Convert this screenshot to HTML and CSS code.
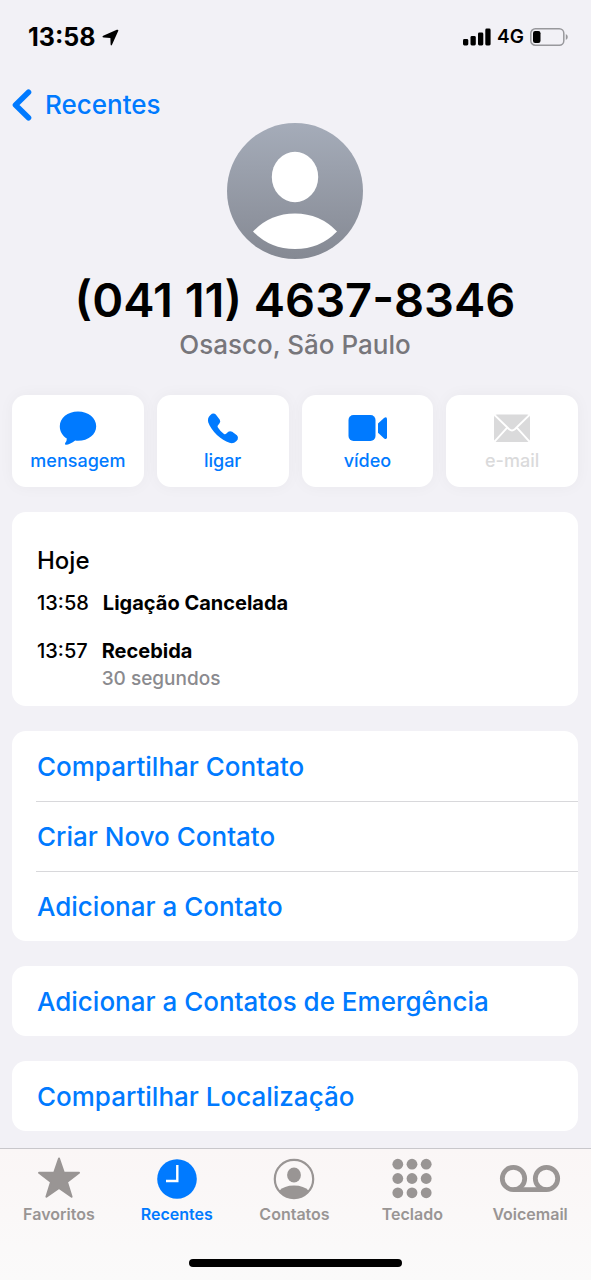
FILE: index.html
```html
<!DOCTYPE html>
<html lang="pt-BR">
<head>
<meta charset="utf-8">
<meta name="viewport" content="width=device-width, initial-scale=1">
<title>(041 11) 4637-8346</title>
<link rel="stylesheet" href="styles.css">
</head>
<body>
<div class="screen">
  <header class="status-bar">
    <div class="status-left">
      <span class="clock">13:58</span>
      <svg width="17" height="17" viewBox="0 0 17 17" aria-hidden="true"><path d="M1.200 6.800 14.800.8Q16.800.2 16.200 2L10 15.800Q8.900 17.200 8.600 15.200L8.400 8.900 1.800 8.600Q-.5 8 1.200 6.800Z"/></svg>
    </div>
    <div class="status-right">
      <svg width="28" height="18" viewBox="0 0 28 18" aria-hidden="true"><rect x="0" y="11" width="5.300" height="6.500" rx="1.400"/><rect x="7.500" y="8" width="5.300" height="9.500" rx="1.400"/><rect x="15" y="4.500" width="5.300" height="13" rx="1.400"/><rect x="22.300" y="0.500" width="5.300" height="17" rx="1.400"/></svg>
      <span class="network">4G</span>
      <svg width="38" height="18" viewBox="0 0 38 18" aria-hidden="true"><rect x="0.800" y="0.800" width="33" height="16.400" rx="4.500" fill="none" stroke="#98989c" stroke-width="1.500"/><rect x="3" y="3" width="7.500" height="12" rx="2.200"/><path d="M35.800 6v6q2-.9 2-3t-2-3Z" fill="#98989c"/></svg>
    </div>
  </header>

  <nav class="nav-bar">
    <a class="back" href="#recentes">
      <svg width="20" height="32" viewBox="0 0 20 32" aria-hidden="true"><path d="M16.500 3.200 3.500 16 16.500 28.800" fill="none" stroke="currentColor" stroke-width="5.600" stroke-linecap="round" stroke-linejoin="round"/></svg>
      <span>Recentes</span>
    </a>
  </nav>

  <main class="content">
    <section class="profile">
      <svg class="avatar" width="136" height="136" viewBox="0 0 136 136" aria-hidden="true">
        <defs><linearGradient id="avatar-fill" x1="0" y1="0" x2="0" y2="1"><stop offset="0" stop-color="#a5acb9"/><stop offset="1" stop-color="#858993"/></linearGradient></defs>
        <circle cx="68" cy="68" r="68" fill="url(#avatar-fill)"/>
        <ellipse cx="68" cy="54" rx="23.200" ry="25.200" fill="#fff"/>
        <path d="M26 108.500Q43 90.500 68 90.500T110 108.500Q93 126 68 126T26 108.500Z" fill="#fff"/>
      </svg>
      <h1 class="number">(041 11) 4637-8346</h1>
      <p class="place">Osasco, São Paulo</p>
    </section>

    <div class="actions">
      <button class="action" type="button">
        <svg width="38" height="34" viewBox="0 0 38 34" aria-hidden="true"><path d="M19 .5C29.500.5 37.200 7 37.200 15.300S29.500 29.800 19 29.800q-1.500 0-2.800-.2C12.700 32.300 9 34 6.800 33.800q-1.500-.4-.6-1.800 1.800-2.200 1.600-4.500C3.500 25 .8 20.500.8 15.300.8 7 8.500.5 19 .5Z" fill="currentColor"/></svg>
        <span>mensagem</span>
      </button>
      <button class="action" type="button">
        <svg width="32" height="34" viewBox="0 0 32 34" aria-hidden="true"><path d="M3.200 4.200 4.900 2.800Q7.100 1.700 8.800 3.600L12.800 8.800Q13.900 10.800 12.400 12.500L10.800 14.400Q10.200 15.300 10.900 16.500 13.200 20.300 17 22.900 18.200 23.600 19.100 22.800L21.300 20.800Q23 19.500 25.200 20.800L29.900 24.200Q32 26.300 30.700 28.600L29.200 30.200Q26.500 33 22.500 31.800C14.500 29.500 4.200 20 1.200 11.300Q.2 6.800 3.200 4.200Z" fill="currentColor"/></svg>
        <span>ligar</span>
      </button>
      <button class="action" type="button">
        <svg width="40" height="34" viewBox="0 0 40 34" aria-hidden="true"><rect x="1.500" y="4" width="27" height="26" rx="5" fill="currentColor"/><path d="M31 12.500 37 7Q40 5.200 40 8.300V26.200Q39.900 29 37.200 27.500L31 21.800Z" fill="currentColor"/></svg>
        <span>vídeo</span>
      </button>
      <button class="action" type="button" disabled>
        <svg width="36" height="34" viewBox="0 0 36 34" aria-hidden="true"><rect y="3.500" width="36" height="27.500" rx="3" fill="currentColor"/><path d="M.5 4 15.200 18.200Q18 20.600 20.800 18.200L35.500 4M.5 30.500 13.200 16.700M35.500 30.500 22.800 16.700" fill="none" stroke="#fff" stroke-width="1.900"/></svg>
        <span>e-mail</span>
      </button>
    </div>

    <section class="card history">
      <h2 class="day">Hoje</h2>
      <div class="call">
        <time class="call-time">13:58</time>
        <div><p class="call-kind">Ligação Cancelada</p></div>
      </div>
      <div class="call">
        <time class="call-time">13:57</time>
        <div>
          <p class="call-kind">Recebida</p>
          <p class="call-length">30 segundos</p>
        </div>
      </div>
    </section>

    <div class="card">
      <button class="row" type="button"><span>Compartilhar Contato</span></button>
      <button class="row" type="button"><span>Criar Novo Contato</span></button>
      <button class="row" type="button"><span>Adicionar a Contato</span></button>
    </div>
    <div class="card">
      <button class="row" type="button"><span>Adicionar a Contatos de Emergência</span></button>
    </div>
    <div class="card">
      <button class="row" type="button"><span>Compartilhar Localização</span></button>
    </div>
  </main>

  <footer class="tab-bar">
    <nav class="tabs">
      <a class="tab" href="#favoritos">
        <svg width="44" height="44" viewBox="0 0 44 44" aria-hidden="true"><path d="M22 2.500 26.800 16.500 42 16.800 30 26 34.600 40.800 22 32 9.400 40.800 14 26 2 16.800 17.200 16.500Z" fill="currentColor" stroke="currentColor" stroke-width="2" stroke-linejoin="round"/></svg>
        <span>Favoritos</span>
      </a>
      <a class="tab tab-current" href="#recentes" aria-current="page">
        <svg width="40" height="44" viewBox="0 0 40 44" aria-hidden="true"><circle cx="20" cy="23" r="19.800" fill="currentColor"/><path d="M20.300 9V25H9" fill="none" stroke="#fff" stroke-width="2.400"/></svg>
        <span>Recentes</span>
      </a>
      <a class="tab" href="#contatos">
        <svg width="42" height="44" viewBox="0 0 42 44" aria-hidden="true"><defs><clipPath id="badge"><circle cx="21" cy="23" r="19"/></clipPath></defs><circle cx="21" cy="23" r="19.200" fill="none" stroke="currentColor" stroke-width="2.200"/><g clip-path="url(#badge)" fill="currentColor"><ellipse cx="21" cy="19" rx="6.900" ry="7.500"/><path d="M6 35Q11 29.500 21 29.500T36 35L34 43H8Z"/></g></svg>
        <span>Contatos</span>
      </a>
      <a class="tab" href="#teclado">
        <svg width="40" height="44" viewBox="0 0 40 44" aria-hidden="true"><g fill="currentColor"><circle cx="5.800" cy="8.200" r="5.400"/><circle cx="20" cy="8.200" r="5.400"/><circle cx="34.200" cy="8.200" r="5.400"/><circle cx="5.800" cy="22.500" r="5.400"/><circle cx="20" cy="22.500" r="5.400"/><circle cx="34.200" cy="22.500" r="5.400"/><circle cx="5.800" cy="36.800" r="5.400"/><circle cx="20" cy="36.800" r="5.400"/><circle cx="34.200" cy="36.800" r="5.400"/></g></svg>
        <span>Teclado</span>
      </a>
      <a class="tab" href="#voicemail">
        <svg width="62" height="44" viewBox="0 0 62 44" aria-hidden="true"><g fill="none" stroke="currentColor" stroke-width="4.800"><circle cx="14.500" cy="22.500" r="11.200"/><circle cx="47.500" cy="22.500" r="11.200"/><path d="M14.500 33.700H47.500"/></g></svg>
        <span>Voicemail</span>
      </a>
    </nav>
    <div class="home-indicator"></div>
  </footer>
</div>
</body>
</html>
```
FILE: styles.css
```css
* {
  box-sizing: border-box;
}

body {
  margin: 0;
  background: #f2f1f6;
  color: #000;
  font-family: Inter, "Liberation Sans", sans-serif;
}

h1, h2, p {
  margin: 0;
}

svg {
  display: block;
  flex: none;
}

button {
  border: 0;
  font-family: inherit;
  color: #007aff;
}

a {
  color: inherit;
  text-decoration: none;
}

.screen {
  display: flex;
  flex-direction: column;
  min-height: 100vh;
}

.status-bar {
  display: flex;
  justify-content: space-between;
  align-items: center;
  height: 74px;
  padding: 0 23px 0 28px;
}

.status-left,
.status-right {
  display: flex;
  align-items: center;
  gap: 6px;
}

.clock {
  font-size: 25px;
  line-height: 32px;
  font-weight: 700;
}

.network {
  font-size: 19px;
  line-height: 24px;
  font-weight: 600;
}

.nav-bar {
  height: 49px;
  padding: 15px 13px 0 12px;
}

.back {
  display: inline-flex;
  align-items: center;
  gap: 13px;
  color: #007aff;
  font-size: 26px;
  line-height: 32px;
  font-weight: 500;
}

.content {
  display: flex;
  flex-direction: column;
  flex: 1;
  gap: 25px;
  padding: 0 13px 16px 12px;
}

.profile {
  display: flex;
  flex-direction: column;
  align-items: center;
  text-align: center;
}

.number {
  margin-top: 13px;
  font-size: 47px;
  line-height: 56px;
  font-weight: 600;
}

.place {
  padding: 1px 0 9px;
  color: #77767b;
  font-size: 26px;
  line-height: 32px;
  font-weight: 500;
}

.actions {
  display: grid;
  grid-template-columns: repeat(4, 1fr);
  gap: 13px;
}

.action {
  display: flex;
  flex-direction: column;
  align-items: center;
  gap: 4px;
  height: 92px;
  padding: 16px 0 0;
  border-radius: 14px;
  background: #fff;
  box-shadow: 0 0 16px rgb(0 0 0 / 4%);
  font-size: 18px;
  line-height: 24px;
  font-weight: 500;
}

.action:disabled {
  color: #dadadb;
}

.card {
  overflow: hidden;
  border-radius: 14px;
  background: #fff;
}

.history {
  padding: 33px 25px 13px;
}

.day {
  margin-bottom: 12px;
  font-size: 24px;
  line-height: 32px;
  font-weight: 500;
}

.call {
  display: flex;
  gap: 14px;
  font-size: 20px;
  line-height: 28px;
}

.call + .call {
  margin-top: 20px;
}

.call-time {
  font-weight: 500;
}

.call-kind {
  font-weight: 700;
}

.call-length {
  color: #8a8a8e;
  font-size: 19px;
  font-weight: 500;
}

.row {
  display: block;
  width: 100%;
  padding: 0 0 0 24px;
  background: none;
  text-align: left;
  font-size: 26px;
  line-height: 32px;
  font-weight: 500;
}

.row span {
  display: block;
  padding: 20px 1px 18px;
}

.row + .row span {
  border-top: 1px solid #d8d8db;
  padding-top: 19px;
}

.tab-bar {
  position: sticky;
  bottom: 0;
  display: flex;
  flex-direction: column;
  align-items: center;
  height: 132px;
  border-top: 1px solid #c8c7cb;
  background: linear-gradient(#faf6f6, #fafafa);
}

.tabs {
  display: grid;
  grid-template-columns: repeat(5, 1fr);
  width: 100%;
  padding: 7px 2px 0 0;
}

.tab {
  display: flex;
  flex-direction: column;
  align-items: center;
  gap: 2px;
  color: #999594;
  font-size: 16px;
  line-height: 24px;
  font-weight: 600;
}

.tab-current {
  color: #007aff;
}

.home-indicator {
  width: 36%;
  height: 8px;
  margin-top: 33px;
  border-radius: 4px;
  background: #000;
}
```
